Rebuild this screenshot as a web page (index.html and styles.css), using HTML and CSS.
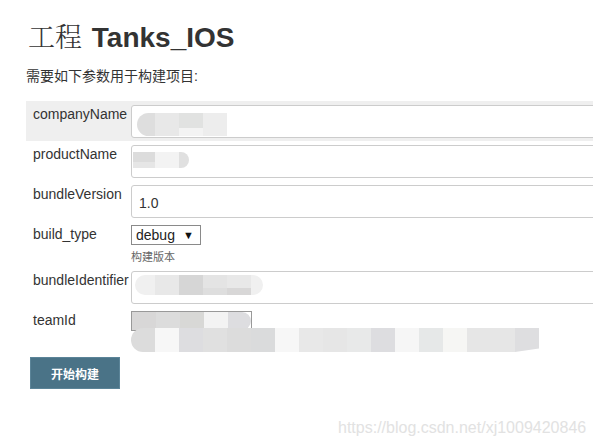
FILE: index.html
```html
<!DOCTYPE html>
<html lang="zh">
<head>
<meta charset="utf-8">
<title>工程 Tanks_IOS</title>
<link rel="stylesheet" href="styles.css">
</head>
<body>
<div class="page">
  <h1 class="title"><span class="cn">工程</span> Tanks_IOS</h1>
  <p class="intro">需要如下参数用于构建项目:</p>
  <div class="form">
    <div class="row hl">
      <div class="label">companyName</div>
      <div class="field">
        <div class="input">
          <div class="blur b-company">
            <span class="t w18 r-l c-de"></span>
            <span class="t c-e8"></span>
            <span class="t split"><i class="c-e1"></i><i class="c-f3"></i></span>
            <span class="t c-ed"></span>
          </div>
        </div>
      </div>
    </div>
    <div class="row">
      <div class="label">productName</div>
      <div class="field">
        <div class="input">
          <div class="blur b-product">
            <span class="t w22 r-l split"><i class="c-dc"></i><i class="c-e6"></i></span>
            <span class="t c-f3"></span>
            <span class="t w10 r-r c-e0"></span>
          </div>
        </div>
      </div>
    </div>
    <div class="row">
      <div class="label">bundleVersion</div>
      <div class="field">
        <input class="input text" type="text" value="1.0">
      </div>
    </div>
    <div class="row">
      <div class="label">build_type</div>
      <div class="field">
        <div class="select"><span>debug</span><span class="arrow">▼</span></div>
        <div class="desc">构建版本</div>
      </div>
    </div>
    <div class="row">
      <div class="label">bundleIdentifier</div>
      <div class="field">
        <div class="input">
          <div class="blur b-bundle">
            <span class="t w20 r-l c-f0"></span>
            <span class="t c-e8"></span>
            <span class="t c-d6"></span>
            <span class="t split"><i class="c-e4"></i><i class="c-de"></i></span>
            <span class="t split"><i class="c-e8"></i><i class="c-d8"></i></span>
            <span class="t w12 r-r c-f0"></span>
          </div>
        </div>
      </div>
    </div>
    <div class="row">
      <div class="label">teamId</div>
      <div class="field">
        <div class="small">
          <div class="blur b-team">
            <span class="t c-d8"></span>
            <span class="t c-dc"></span>
            <span class="t c-d7"></span>
            <span class="t c-f3"></span>
            <span class="t w23 r-r c-dd"></span>
          </div>
        </div>
        <div class="blur b-desc">
          <span class="t r-l c-dc"></span>
          <span class="t c-f7"></span>
          <span class="t c-dd"></span>
          <span class="t c-e0"></span>
          <span class="t c-dc"></span>
          <span class="t c-db"></span>
          <span class="t c-f7"></span>
          <span class="t c-e8"></span>
          <span class="t c-e6"></span>
          <span class="t c-e9"></span>
          <span class="t c-dd"></span>
          <span class="t c-f6"></span>
          <span class="t c-e7"></span>
          <span class="t c-f5"></span>
          <span class="t w48 c-e6"></span>
          <span class="t slant c-df"></span>
        </div>
      </div>
    </div>
  </div>
  <button class="build" type="button">开始构建</button>
</div>
<div class="watermark">https://blog.csdn.net/xj1009420846</div>
</body>
</html>
```
FILE: styles.css
```css
html, body {
  margin: 0;
  padding: 0;
  overflow: hidden;
  background: #fff;
}
body {
  width: 593px;
  height: 447px;
  position: relative;
  font-family: "Liberation Sans", Arial, "Noto Sans CJK SC", sans-serif;
  color: #333;
  font-size: 14px;
}
.page {
  padding-left: 26px;
}
.title {
  margin: 22px 0 0 2px;
  height: 32px;
  font-size: 28px;
  line-height: 32px;
  font-weight: bold;
  color: #333;
  white-space: nowrap;
}
.title .cn {
  font-family: "Noto Serif CJK SC", "Noto Sans CJK SC", serif;
  font-weight: 300;
  font-size: 27px;
  line-height: 20px;
  margin-right: 2px;
}
.intro {
  margin: 12px 0 15px;
  font-family: "Liberation Sans", "Noto Sans CJK SC", sans-serif;
  font-size: 14px;
  line-height: 20px;
}
.form {
  display: flex;
  flex-direction: column;
}
.row {
  display: flex;
  padding: 4px 0 3px;
}
.row.hl {
  background: #efefef;
}
.label {
  width: 98px;
  padding-left: 7px;
  flex: none;
  line-height: 18px;
  font-size: 14px;
  white-space: nowrap;
}
.field {
  flex: 1;
  min-width: 0;
  display: flex;
  flex-direction: column;
  align-items: flex-start;
}
.input {
  box-sizing: border-box;
  width: calc(100% + 12px);
  height: 33px;
  border: 1px solid #ccc;
  border-radius: 3px;
  background: #fff;
  display: flex;
  margin: 0;
}
.input.text {
  font-family: "Liberation Sans", Arial, sans-serif;
  font-size: 14px;
  color: #333;
  padding: 2px 7px 0;
  outline: none;
}
.select {
  box-sizing: border-box;
  width: 70px;
  height: 20px;
  border: 1px solid #8a8a8a;
  display: flex;
  align-items: center;
  justify-content: space-between;
  padding: 0 6px 0 4px;
  font-size: 14px;
  color: #222;
  background: #fff;
}
.select .arrow {
  font-size: 11px;
  color: #111;
}
.desc {
  margin-top: 3px;
  font-size: 11px;
  line-height: 16px;
  color: #666;
  font-family: "Noto Sans CJK SC", sans-serif;
}
.small {
  box-sizing: border-box;
  width: 121px;
  height: 20px;
  border: 1px solid #999;
  display: flex;
  overflow: hidden;
}
.blur {
  display: flex;
}
.blur .t {
  width: 24px;
  flex: none;
  display: flex;
  flex-direction: column;
}
.blur .t i {
  flex: 1;
}
.blur .w10 { width: 10px; }
.blur .w12 { width: 12px; }
.blur .w18 { width: 18px; }
.blur .w20 { width: 20px; }
.blur .w22 { width: 22px; }
.blur .w23 { width: 23px; }
.blur .w48 { width: 48px; }
.blur .r-l { border-radius: 12px 0 0 12px; }
.blur .r-r { border-radius: 0 12px 12px 0; }
.blur .slant { clip-path: polygon(0 0, 100% 0, 100% 85%, 0 100%); }
.split i:first-child { flex: 15; }
.split i:last-child { flex: 8; }

.b-company { margin: 7px 0 0 5px; height: 23px; }
.b-product { margin: 6px 0 0 1px; height: 16px; }
.b-bundle { margin: 3px 0 0 3px; height: 20px; }
.b-team { height: 18px; }
.b-desc { margin-top: -3px; height: 24px; }

.c-d6 { background: #d6d6d6; }
.c-d7 { background: #d8d8d6; }
.c-d8 { background: #d8d7d7; }
.c-db { background: #dadbdc; }
.c-dc { background: #dcdcdc; }
.c-dd { background: #dddde0; }
.c-de { background: #dedede; }
.c-df { background: #dedee0; }
.c-e0 { background: #e0e0e0; }
.c-e1 { background: #e1e2e1; }
.c-e4 { background: #e4e4e4; }
.c-e6 { background: #e6e6e6; }
.c-e7 { background: #e6e8e8; }
.c-e8 { background: #e8e8e8; }
.c-e9 { background: #e8e9e9; }
.c-ed { background: #ededed; }
.c-f0 { background: #f0f0f0; }
.c-f3 { background: #f3f3f3; }
.c-f5 { background: #f6f6f4; }
.c-f6 { background: #f6f6f6; }
.c-f7 { background: #f7f7f7; }

.build {
  margin: 2px 0 0 4px;
  width: 90px;
  height: 32px;
  background: #4a7387;
  border: 1px solid #5b8498;
  color: #fff;
  font-family: "Noto Sans CJK SC", sans-serif;
  font-weight: bold;
  font-size: 12px;
  padding: 0;
}
.watermark {
  position: absolute;
  left: 338px;
  top: 419px;
  font-size: 16px;
  line-height: 18px;
  color: #e2e2e2;
  font-family: "Liberation Sans", Arial, sans-serif;
  white-space: nowrap;
}
```
